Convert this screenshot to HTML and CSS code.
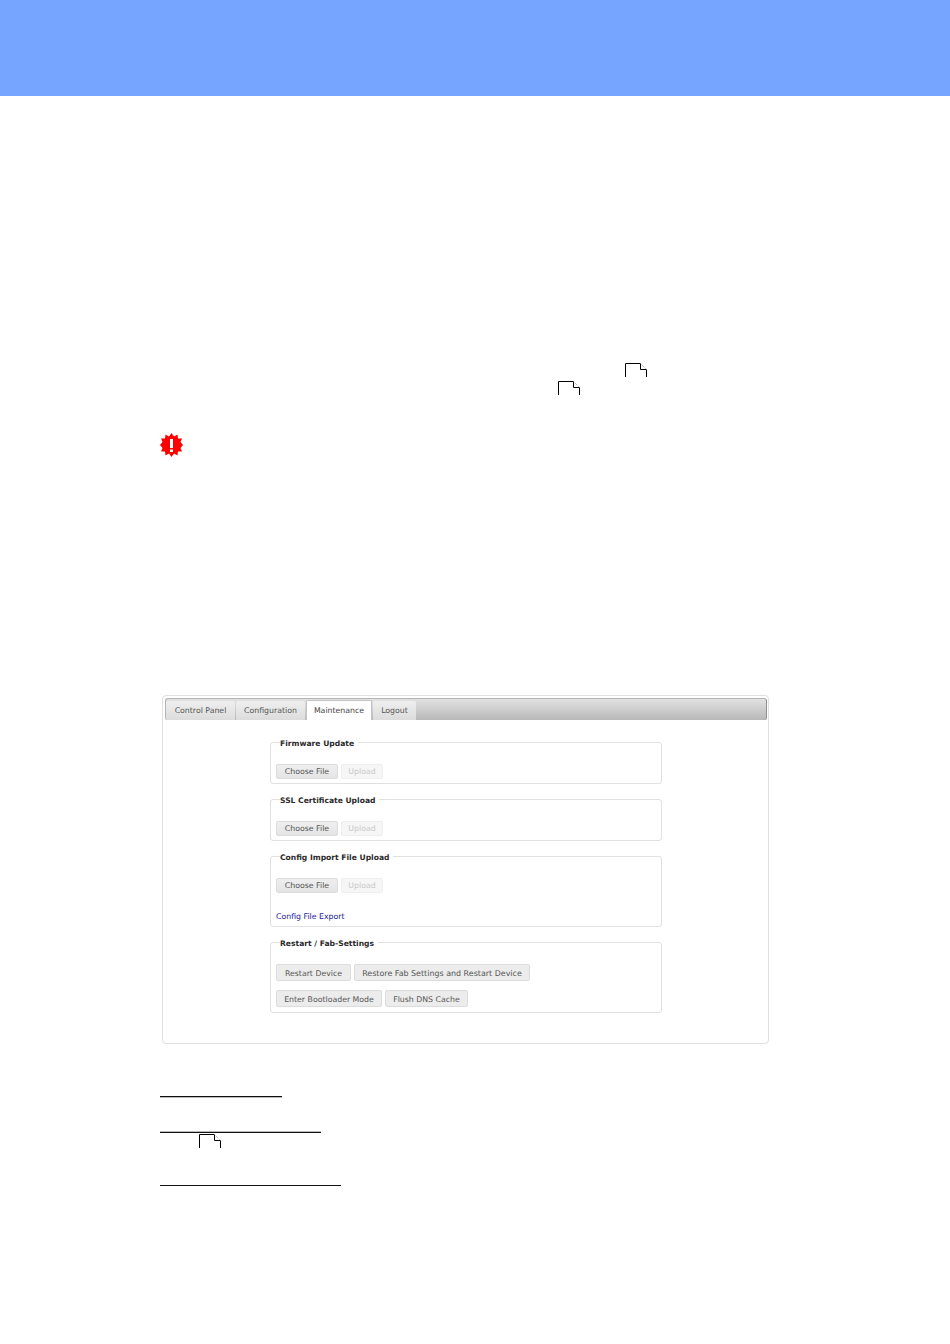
FILE: index.html
```html
<!DOCTYPE html>
<html lang="en">
<head>
<meta charset="utf-8">
<title>Maintenance</title>
<link rel="stylesheet" href="styles.css">
</head>
<body>
<header class="banner"></header>
<main class="page">
  <div class="note-row note-a">
    <svg class="note" width="22" height="14" viewBox="0 0 22 14"><path class="note-line" d="M.5 14V.5H15.500V6.500H21.500V14"/><path class="note-fold" d="M15.500 .5L21.500 6.500"/></svg>
  </div>
  <div class="note-row note-b">
    <svg class="note" width="22" height="14" viewBox="0 0 22 14"><path class="note-line" d="M.5 14V.5H15.500V6.500H21.500V14"/><path class="note-fold" d="M15.500 .5L21.500 6.500"/></svg>
  </div>
  <div class="alert-row">
    <svg class="alert" width="23" height="24" viewBox="0 0 23 24"><path class="alert-burst" d="M11.500 0L14 3.500L17.500 1.500L18 5.500L22 5.500L20.500 9L23 12L20.500 15L22 18.500L18 18.500L17.500 22.500L14 20.500L11.500 24L9 20.500L5.500 22.500L5 18.500L1 18.500L2.500 15L0 12L2.500 9L1 5.500L5 5.500L5.500 1.500L9 3.500Z"/><rect class="alert-mark" x="10" y="6" width="3" height="9"/><rect class="alert-mark" x="10" y="16.500" width="3" height="2.500"/></svg>
  </div>

  <section class="panel">
    <nav class="tabs">
      <a class="tab tab-control">Control Panel</a>
      <a class="tab tab-config">Configuration</a>
      <a class="tab tab-maint active">Maintenance</a>
      <a class="tab tab-logout">Logout</a>
    </nav>
    <div class="forms">
      <fieldset class="group">
        <legend>Firmware Update</legend>
        <div class="btn-row"><button class="btn btn-file">Choose File</button><button class="btn btn-upload" disabled>Upload</button></div>
      </fieldset>
      <fieldset class="group">
        <legend>SSL Certificate Upload</legend>
        <div class="btn-row"><button class="btn btn-file">Choose File</button><button class="btn btn-upload" disabled>Upload</button></div>
      </fieldset>
      <fieldset class="group group-tall">
        <legend>Config Import File Upload</legend>
        <div class="btn-row"><button class="btn btn-file">Choose File</button><button class="btn btn-upload" disabled>Upload</button></div>
        <a class="export" href="#">Config File Export</a>
      </fieldset>
      <fieldset class="group group-tall">
        <legend>Restart / Fab-Settings</legend>
        <div class="btn-row"><button class="btn btn-tall btn-restart">Restart Device</button><button class="btn btn-tall btn-restore">Restore Fab Settings and Restart Device</button></div>
        <div class="btn-row second"><button class="btn btn-tall btn-boot">Enter Bootloader Mode</button><button class="btn btn-tall btn-flush">Flush DNS Cache</button></div>
      </fieldset>
    </div>
  </section>

  <div class="rule rule-a"></div>
  <div class="rule rule-b"></div>
  <div class="note-row note-c">
    <svg class="note" width="22" height="14" viewBox="0 0 22 14"><path class="note-line" d="M.5 14V.5H15.500V6.500H21.500V14"/><path class="note-fold" d="M15.500 .5L21.500 6.500"/></svg>
  </div>
  <div class="rule rule-c"></div>
</main>
</body>
</html>
```
FILE: styles.css
```css
html, body { margin: 0; padding: 0; background: #fff; }
body { height: 1344px; overflow: hidden; font-family: "DejaVu Sans", Verdana, sans-serif; }

.banner { height: 96px; background: #75a5ff; }
.page { padding-left: 160px; }

.note-row { height: 14px; line-height: 0; }
.note { display: block; }
.note-line { fill: none; stroke: #000; stroke-width: 1; }
.note-fold { fill: none; stroke: #999; stroke-width: 1; stroke-dasharray: 1 1; }
.note-a { margin-top: 267px; padding-left: 465px; }
.note-b { margin-top: 4px; padding-left: 398px; }
.note-c { margin-top: 1px; padding-left: 39px; }

.alert-row { margin-top: 38px; height: 24px; }
.alert { display: block; }
.alert-burst { fill: #f00; }
.alert-mark { fill: #fff; }

.panel {
  box-sizing: border-box;
  margin: 238px 0 0 2px;
  width: 607px;
  height: 349px;
  padding: 2px;
  border: 1px solid #e0e0e0;
  border-radius: 4px;
}

.tabs {
  box-sizing: border-box;
  display: flex;
  align-items: flex-end;
  width: 602px;
  height: 22px;
  border: 1px solid #b4b4b4;
  border-bottom: 0;
  border-right-color: #8e8e8e;
  border-radius: 3px 3px 2px 2px;
  background: linear-gradient(#e2e2e2, #b8b8b8);
  overflow: hidden;
}
.tab {
  box-sizing: border-box;
  height: 19px;
  margin-right: 1px;
  font-size: 7.8px;
  line-height: 20px;
  text-align: center;
  color: #555;
  background: linear-gradient(#efefef, #dcdcdc);
  border-radius: 2px 2px 0 0;
}
.tab-control { width: 69px; }
.tab-config { width: 69px; }
.tab-maint { width: 66px; }
.tab-logout { width: 43px; }
.tab.active {
  height: 20px;
  color: #444;
  background: #fff;
  border: 1px solid #c4c4c4;
  border-bottom: 0;
}

.forms { box-sizing: border-box; padding: 16px 0 0 105px; }

.group {
  box-sizing: border-box;
  margin: 0 0 9px;
  width: 392px;
  height: 48px;
  padding: 0 5px;
  border: 1px solid #e0e0e0;
  border-radius: 3px;
  min-width: 0;
}
.group-tall { height: 77px; }
.group legend {
  margin-left: 4px;
  padding: 3px 4px 0 0;
  font-size: 7.6px;
  font-weight: 700;
  line-height: 10px;
  color: #2b2b2b;
}

.btn-row { display: flex; gap: 3px; margin-top: 15px; }
.btn-row.second { margin-top: 9px; }

.btn {
  box-sizing: border-box;
  height: 15px;
  margin: 0;
  padding: 0;
  font-family: inherit;
  font-size: 7.8px;
  line-height: 13px;
  color: #555;
  text-align: center;
  background: linear-gradient(#efefef, #e4e4e4);
  border: 1px solid #dcdcdc;
  border-radius: 2px;
}
.btn-tall { height: 17px; padding-top: 1px; background: #ececec; }
.btn-file { width: 62px; }
.btn-upload { width: 42px; color: #c8c8c8; background: #f6f6f6; border-color: #efefef; }
.btn-restart { width: 75px; }
.btn-restore { width: 176px; font-size: 7.95px; }
.btn-boot { width: 106px; }
.btn-flush { width: 83px; }

.export {
  display: block;
  margin-top: 19px;
  font-size: 7.8px;
  line-height: 10px;
  color: #1a1a9c;
  text-decoration: none;
}

.rule { height: 1px; background: #111; }
.rule-a { width: 122px; margin-top: 52px; box-shadow: 0 1px 0 #bbb; }
.rule-b { width: 161px; margin-top: 35px; box-shadow: 0 -1px 0 #bbb; }
.rule-c { width: 181px; margin-top: 37px; }
```
